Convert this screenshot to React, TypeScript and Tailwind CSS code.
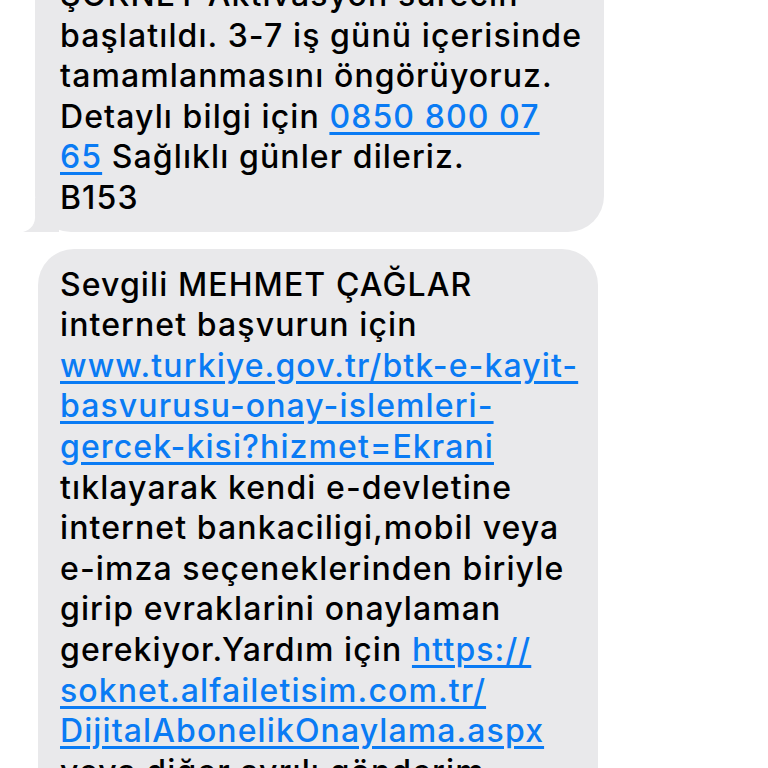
import React from 'react'

type Part = { t: string; link?: boolean }
type Line = Part[]

const first: Line[] = [
  [{ t: 'ŞOKNET Aktivasyon sürecin' }],
  [{ t: 'başlatıldı. 3-7 iş günü içerisinde' }],
  [{ t: 'tamamlanmasını öngörüyoruz.' }],
  [{ t: 'Detaylı bilgi için ' }, { t: '0850 800 07', link: true }],
  [{ t: '65', link: true }, { t: ' Sağlıklı günler dileriz.' }],
  [{ t: 'B153' }],
]

const second: Line[] = [
  [{ t: 'Sevgili MEHMET ÇAĞLAR' }],
  [{ t: 'internet başvurun için' }],
  [{ t: 'www.turkiye.gov.tr/btk-e-kayit-', link: true }],
  [{ t: 'basvurusu-onay-islemleri-', link: true }],
  [{ t: 'gercek-kisi?hizmet=Ekrani', link: true }],
  [{ t: 'tıklayarak kendi e-devletine' }],
  [{ t: 'internet bankaciligi,mobil veya' }],
  [{ t: 'e-imza seçeneklerinden biriyle' }],
  [{ t: 'girip evraklarini onaylaman' }],
  [{ t: 'gerekiyor.Yardım için ' }, { t: 'https://', link: true }],
  [{ t: 'soknet.alfailetisim.com.tr/', link: true }],
  [{ t: 'DijitalAbonelikOnaylama.aspx', link: true }],
  [{ t: 'veya diğer ayrılı gönderim' }],
]

const Lines: React.FC<{ lines: Line[] }> = ({ lines }) => (
  <div>
    {lines.map((line, i) => (
      <div key={i} className="whitespace-pre h-[40.6px] leading-[40.6px]">
        {line.map((p, j) =>
          p.link ? (
            <span
              key={j}
              className="text-[#0a7bf4] underline decoration-[2.5px] underline-offset-[4px]"
            >
              {p.t}
            </span>
          ) : (
            <span key={j}>{p.t}</span>
          )
        )}
      </div>
    ))}
  </div>
)

export default function App() {
  return (
    <div
      className="w-[768px] h-[768px] overflow-hidden bg-white text-black text-[32px] font-medium tracking-[1.1px]"
      style={{ fontFamily: 'Inter, "Noto Sans", sans-serif' }}
    >
      <div className="flex flex-col gap-[17px] -mt-[41px]">
        <div className="relative ml-[35px] w-[569px]">
          <div className="bg-[#e9e9eb] rounded-[36px] pl-[25px] pr-4 pt-[16px] pb-[13px]">
            <Lines lines={first} />
          </div>
          <svg
            className="absolute left-[-12px] bottom-0"
            width="40"
            height="34"
            viewBox="0 0 40 34"
          >
            <path
              d="M12 0 L36 0 L36 34 L0 34 C8 32 13 26 12 16 Z"
              fill="#e9e9eb"
            />
          </svg>
        </div>
        <div className="ml-[38px] w-[560px] bg-[#e9e9eb] rounded-[36px] pl-[22px] pr-4 pt-[16px] pb-[14px]">
          <Lines lines={second} />
        </div>
      </div>
    </div>
  )
}
